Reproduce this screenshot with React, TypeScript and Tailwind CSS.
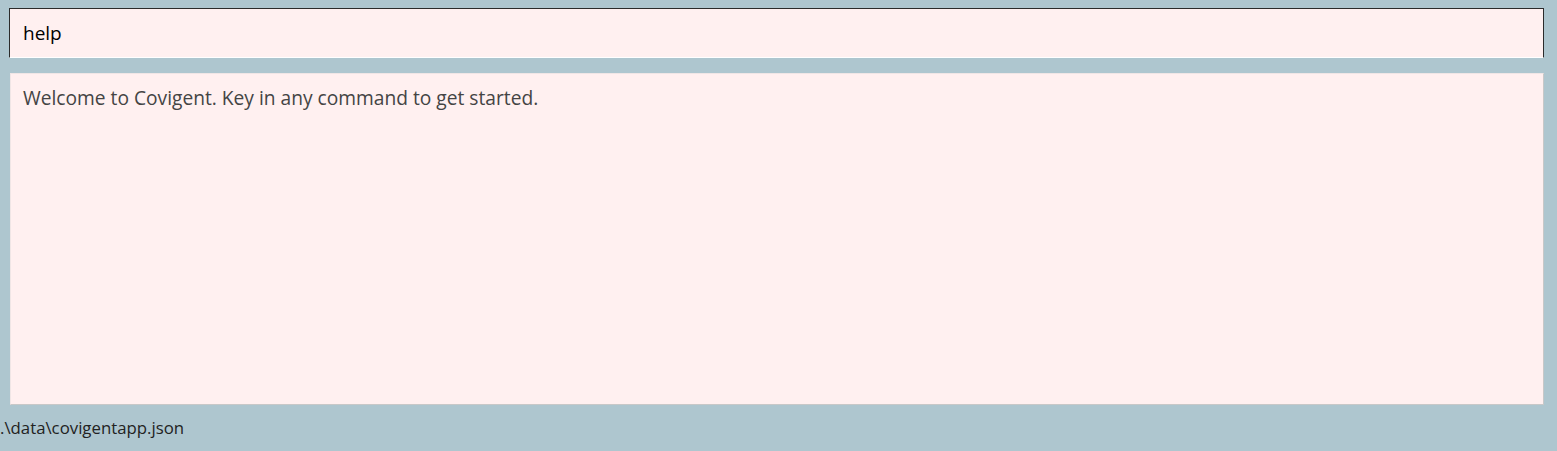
export default function App() {
  return (
    <div
      className="w-[1557px] h-[451px] bg-[#aec6cf] flex flex-col overflow-hidden"
      style={{ fontFamily: '"Open Sans", "Noto Sans", sans-serif' }}
    >
      <div className="pt-2 pl-[9px] pr-[13px]">
        <div className="h-[50px] bg-[#fff0f0] border border-t-[#2b2b2b] border-l-[#2b2b2b] border-r-[#2b2b2b] border-b-white flex items-center pl-[13px] text-[19px] text-black">
          help
        </div>
      </div>
      <div className="pt-[15px] pl-[10px] pr-[13px]">
        <div className="h-[332px] bg-[#fff0f0] border border-[#f0e6e6] border-r-[#c8c8c8] border-b-[#c8c8c8] pl-[12px] pt-[10px] text-[19.2px] leading-7 text-[#444]">
          Welcome to Covigent. Key in any command to get started.
        </div>
      </div>
      <div className="pt-[13px] text-[16.8px] text-[#222] leading-5">
        .\data\covigentapp.json
      </div>
    </div>
  );
}
